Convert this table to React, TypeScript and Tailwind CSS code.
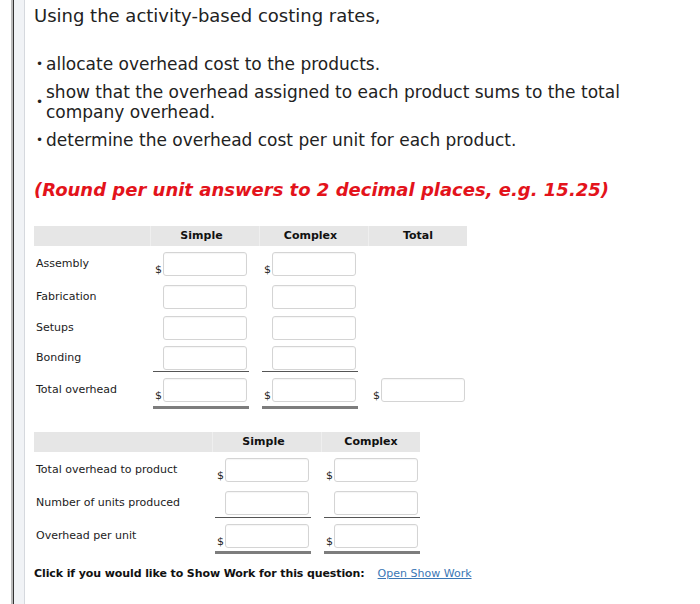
import { ReactNode } from "react";

type Cell = { dollar?: boolean; line?: "single" | "double" } | null;

type Row = {
  label: string;
  height: number;
  cells: Cell[];
};

const font = { fontFamily: '"DejaVu Sans", Verdana, sans-serif' };

function Input() {
  return (
    <div className="h-[24px] w-[84px] rounded-[3px] border border-[#d4d4d4] bg-white shadow-[inset_0_1px_1px_rgba(0,0,0,0.04)]" />
  );
}

function ValueCell({ cell, height }: { cell: Cell; height: number }) {
  if (!cell) return <div />;
  const line =
    cell.line === "single"
      ? "border-b border-[#555]"
      : cell.line === "double"
        ? "border-b-[3px] border-[#7d7d7d]"
        : "";
  return (
    <div className="pl-[3px]">
      <div
        className={`flex w-[96px] items-start pt-[6px] ${line}`}
        style={{ height }}
      >
        <span className="mt-[11px] w-[10px] pl-[2px] text-[11px] leading-[14px] text-[#222]">
          {cell.dollar ? "$" : ""}
        </span>
        <Input />
      </div>
    </div>
  );
}

function Table({
  cols,
  headers,
  rows,
  width,
}: {
  cols: string;
  headers: string[];
  rows: Row[];
  width: string;
}) {
  return (
    <div className={width}>
      <div
        className={`grid ${cols} h-[20px] items-center bg-[#e6e6e6] text-[11px] font-bold text-[#111]`}
      >
        <div className="h-full" />
        {headers.map((h, i) => (
          <div
            key={h}
            className={`flex h-full items-center justify-center border-l border-[#efefef] ${
              i < headers.length - 1 ? "pr-[7px]" : ""
            }`}
          >
            {h}
          </div>
        ))}
      </div>
      {rows.map((r) => (
        <div key={r.label} className={`grid ${cols}`} style={{ height: r.height }}>
          <div className="pl-[2px] pt-[11px] text-[11px] leading-[14px] text-[#222]">
            {r.label}
          </div>
          {r.cells.map((c, i) => (
            <ValueCell key={i} cell={c} height={r.height} />
          ))}
        </div>
      ))}
    </div>
  );
}

function Bullet({ children }: { children: ReactNode }) {
  return (
    <li className="flex items-center">
      <span className="w-[12px] pl-[2px] text-[12px] leading-none">•</span>
      <span>{children}</span>
    </li>
  );
}

const allocRows: Row[] = [
  { label: "Assembly", height: 33, cells: [{ dollar: true }, { dollar: true }, null] },
  { label: "Fabrication", height: 31, cells: [{}, {}, null] },
  { label: "Setups", height: 30, cells: [{}, {}, null] },
  {
    label: "Bonding",
    height: 32,
    cells: [{ line: "single" }, { line: "single" }, null],
  },
  {
    label: "Total overhead",
    height: 37,
    cells: [
      { dollar: true, line: "double" },
      { dollar: true, line: "double" },
      { dollar: true },
    ],
  },
];

const unitRows: Row[] = [
  {
    label: "Total overhead to product",
    height: 33,
    cells: [{ dollar: true }, { dollar: true }],
  },
  {
    label: "Number of units produced",
    height: 33,
    cells: [{ line: "single" }, { line: "single" }],
  },
  {
    label: "Overhead per unit",
    height: 36,
    cells: [
      { dollar: true, line: "double" },
      { dollar: true, line: "double" },
    ],
  },
];

export default function App() {
  return (
    <div className="flex min-h-[604px] bg-white" style={font}>
      {/* left frame */}
      <div className="flex w-[25px] shrink-0">
        <div className="w-[11px]" />
        <div className="w-[2px] bg-[#b9b9b9]" />
        <div className="w-[1px] bg-[#333]" />
        <div className="w-[10px] bg-[#f1f3f6]" />
        <div className="w-[1px] bg-[#d6d9de]" />
      </div>

      <div className="flex-1 pl-[9px] pt-[4px] text-[#222]">
        <p className="text-[18px] leading-[24px]">
          Using the activity-based costing rates,
        </p>

        <ul className="mt-[26px] space-y-[8px] text-[17px] leading-[20px]">
          <Bullet>allocate overhead cost to the products.</Bullet>
          <Bullet>
            show that the overhead assigned to each product sums to the total
            <br />
            company overhead.
          </Bullet>
          <Bullet>determine the overhead cost per unit for each product.</Bullet>
        </ul>

        <p className="mt-[28px] text-[18px] font-bold italic leading-[24px] text-[#e3131b]">
          (Round per unit answers to 2 decimal places, e.g. 15.25)
        </p>

        <div className="mt-[24px]">
          <Table
            width="w-[433px]"
            cols="grid-cols-[116px_109px_109px_99px]"
            headers={["Simple", "Complex", "Total"]}
            rows={allocRows}
          />
        </div>

        <div className="mt-[23px]">
          <Table
            width="w-[386px]"
            cols="grid-cols-[178px_109px_99px]"
            headers={["Simple", "Complex"]}
            rows={unitRows}
          />
        </div>

        <p className="mt-[13px] text-[11px] leading-[14px]">
          <span className="font-bold tracking-[-0.1px] text-[#111]">
            Click if you would like to Show Work for this question:
          </span>
          <a className="ml-[13px] text-[#3b77b5] underline" href="#">
            Open Show Work
          </a>
        </p>
      </div>
    </div>
  );
}
